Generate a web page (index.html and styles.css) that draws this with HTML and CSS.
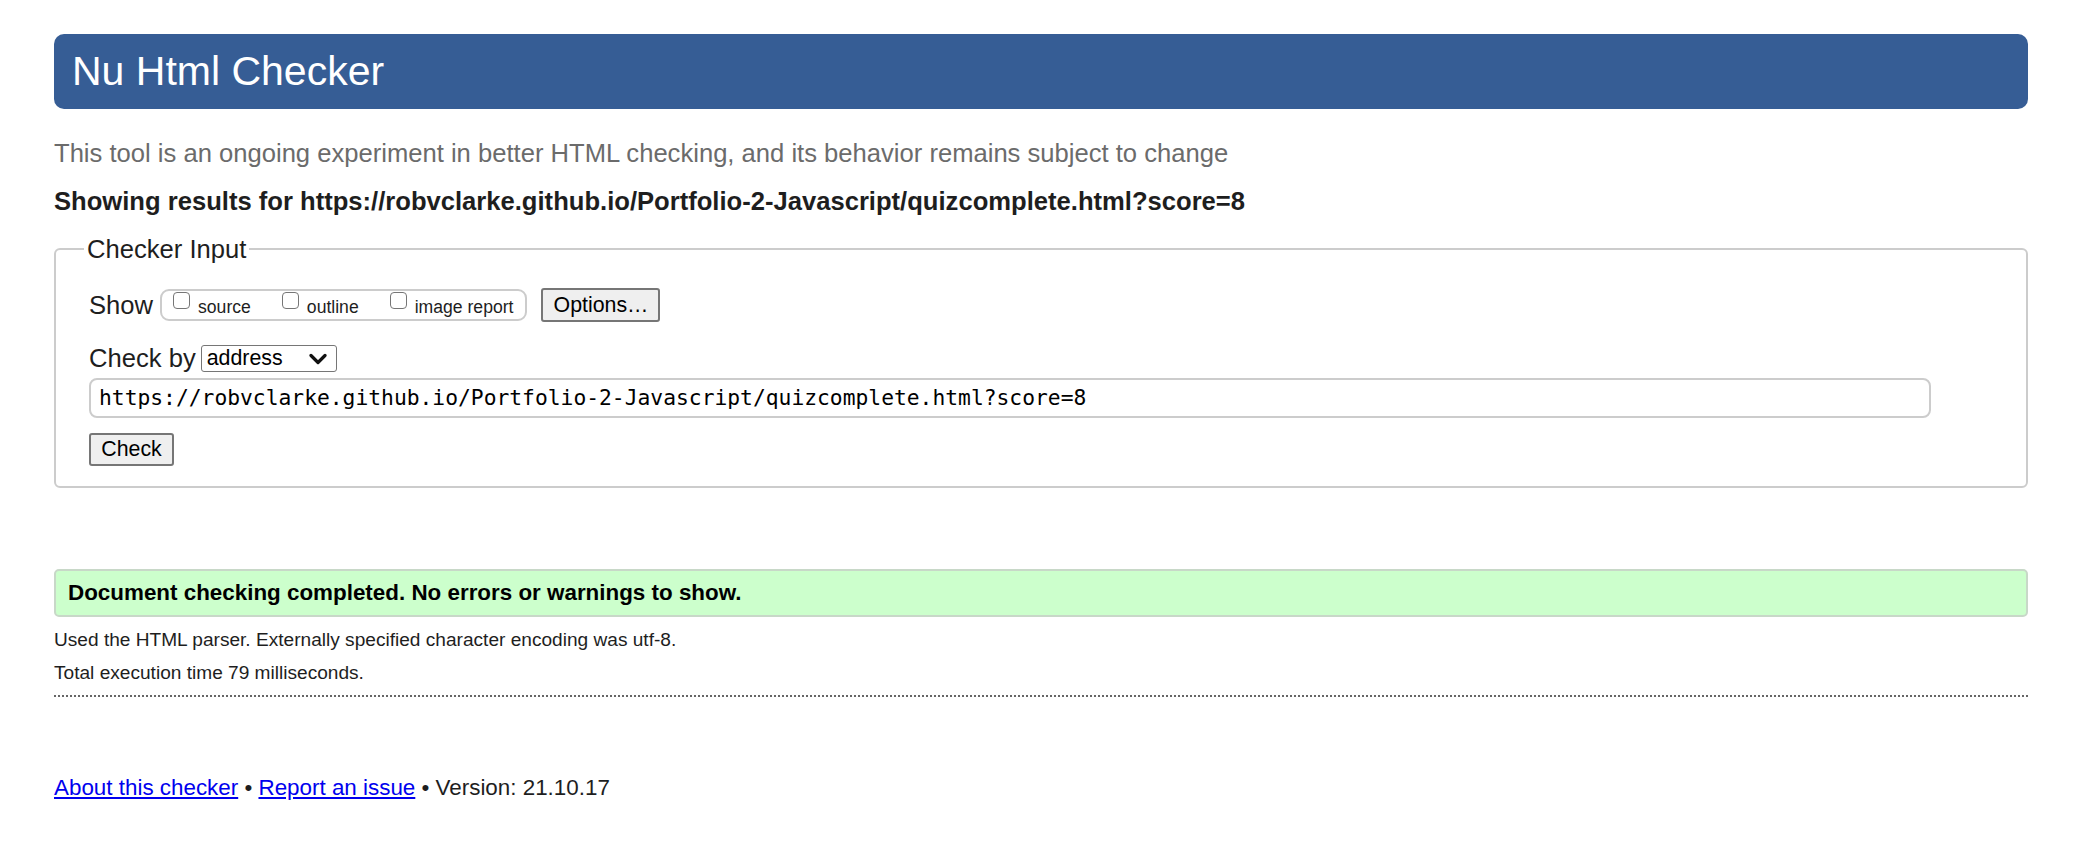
FILE: index.html
```html
<!DOCTYPE html>
<html lang="en">
<head>
<meta charset="utf-8">
<title>Showing results for https://robvclarke.github.io/Portfolio-2-Javascript/quizcomplete.html?score=8 - Nu Html Checker</title>
<link rel="stylesheet" href="styles.css">
</head>
<body>
<div class="page">
  <h1 class="title">Nu Html Checker</h1>
  <p class="tagline">This tool is an ongoing experiment in better HTML checking, and its behavior remains subject to change</p>
  <p class="showing">Showing results for https://robvclarke.github.io/Portfolio-2-Javascript/quizcomplete.html?score=8</p>

  <fieldset class="input-box">
    <legend class="input-legend">Checker Input</legend>
    <div class="row show-row">
      <span class="label">Show</span>
      <span class="show-group">
        <label class="opt"><span class="cb"></span><span class="opt-text">source</span></label>
        <label class="opt"><span class="cb"></span><span class="opt-text">outline</span></label>
        <label class="opt"><span class="cb"></span><span class="opt-text">image report</span></label>
      </span>
      <span class="btn btn-options">Options…</span>
    </div>
    <div class="row by-row">
      <span class="label">Check by</span>
      <span class="select">
        <span class="select-text">address</span>
        <svg class="chev" width="18" height="12" viewBox="0 0 18 12"><path d="M2 2.5 L9 9.5 L16 2.5" fill="none" stroke="#111" stroke-width="3.2" stroke-linecap="round" stroke-linejoin="round"/></svg>
      </span>
    </div>
    <div class="url-field">https://robvclarke.github.io/Portfolio-2-Javascript/quizcomplete.html?score=8</div>
    <div class="check-wrap"><span class="btn btn-check">Check</span></div>
  </fieldset>

  <div class="success">Document checking completed. No errors or warnings to show.</div>
  <p class="details">Used the HTML parser. Externally specified character encoding was utf-8.</p>
  <p class="details details-last">Total execution time 79 milliseconds.</p>

  <p class="footer"><a href="#about">About this checker</a> • <a href="#issue">Report an issue</a> • Version: 21.10.17</p>
</div>
</body>
</html>
```

FILE: styles.css
```css
html, body {
  margin: 0;
  padding: 0;
  background: #ffffff;
}

body {
  font-family: "Liberation Sans", Arial, sans-serif;
  color: #222222;
}

.page {
  padding: 34px 48px 0 54px;
}

.title {
  margin: 0;
  padding: 14px 18px;
  height: 47px;
  line-height: 47px;
  font-size: 41px;
  font-weight: normal;
  color: #ffffff;
  background: #365d95;
  border-radius: 10px;
}

.tagline {
  margin: 29px 0 0;
  font-size: 25.6px;
  line-height: 30px;
  color: #6b6b6b;
}

.showing {
  margin: 18px 0 0;
  font-size: 25.6px;
  line-height: 30px;
  font-weight: bold;
  color: #1e1e1e;
}

.input-box {
  margin: 18px 0 0;
  padding: 24px 0 20px 33px;
  border: 2px solid #cccccc;
  border-radius: 6px;
  min-inline-size: 0;
}

.input-legend {
  margin-left: -5px;
  padding: 0 3px;
  font-size: 25.6px;
  line-height: 30px;
  color: #1e1e1e;
}

.row {
  display: flex;
  align-items: center;
}

.show-row {
  height: 34px;
}

.label {
  font-size: 25.6px;
  color: #1e1e1e;
}

.show-group {
  display: flex;
  align-items: center;
  margin-left: 7px;
  height: 28px;
  padding: 0 12px 0 11px;
  border: 2px solid #cccccc;
  border-radius: 9px;
}

.opt {
  display: flex;
  align-items: flex-start;
  margin-right: 31px;
}

.opt:last-child {
  margin-right: 0;
}

.cb {
  width: 15px;
  height: 15px;
  border: 1.5px solid #767676;
  border-radius: 4px;
  margin-top: -2px;
  background: #ffffff;
}

.opt-text {
  margin-left: 8px;
  font-size: 17.6px;
  line-height: 20px;
  margin-top: 3px;
  color: #1e1e1e;
}

.btn {
  display: inline-flex;
  align-items: center;
  justify-content: center;
  box-sizing: border-box;
  font-size: 21.33px;
  color: #000000;
  background: #efefef;
  border: 2px solid #767676;
  border-radius: 3px;
}

.btn-options {
  margin-left: 14px;
  width: 119px;
  height: 34px;
}

.by-row {
  margin-top: 23px;
  height: 27px;
}

.select {
  display: inline-flex;
  align-items: center;
  justify-content: space-between;
  box-sizing: border-box;
  margin-left: 5px;
  width: 136px;
  height: 27px;
  padding: 0 9px 0 5px;
  border: 1.5px solid #767676;
  border-radius: 3px;
  background: #ffffff;
}

.select-text {
  font-size: 21.33px;
  color: #000000;
}

.url-field {
  box-sizing: border-box;
  margin-top: 6px;
  width: 1842px;
  height: 40px;
  padding: 0 0 0 8px;
  border: 2px solid #cccccc;
  border-radius: 8px;
  font-family: "DejaVu Sans Mono", monospace;
  font-size: 21.3px;
  line-height: 36px;
  color: #000000;
}

.check-wrap {
  margin-top: 15px;
  display: flex;
}

.btn-check {
  width: 85px;
  height: 33px;
}

.success {
  margin-top: 81px;
  box-sizing: border-box;
  height: 48px;
  padding: 0 0 0 12px;
  border: 2px solid #c8d8c8;
  border-radius: 5px;
  background: #ccffcc;
  font-size: 22.4px;
  font-weight: bold;
  line-height: 44px;
  color: #000000;
}

.details {
  margin: 10px 0 0;
  font-size: 19.1px;
  line-height: 25px;
  color: #1e1e1e;
}

.details-last {
  margin-top: 8px;
  padding-bottom: 10px;
  border-bottom: 2px dotted #666666;
}

.footer {
  margin: 78px 0 0;
  font-size: 22.4px;
  line-height: 26px;
  color: #1e1e1e;
}

.footer a {
  color: #0000ee;
}
```
